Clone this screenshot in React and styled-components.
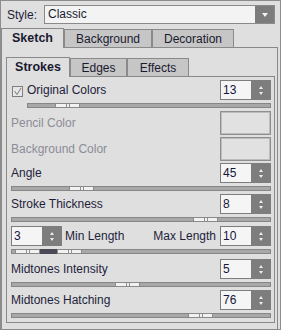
import React from 'react';
import styled, { createGlobalStyle } from 'styled-components';

const Global = createGlobalStyle`
  html, body { margin: 0; padding: 0; background: #dfdfdf; }
  body { font-family: "Liberation Sans", Arial, sans-serif; }
`;

const Window = styled.div`
  box-sizing: border-box;
  width: 281px;
  height: 330px;
  border: 1px solid #8d8d8d;
  background: #dfdfdf;
  display: flex;
  flex-direction: column;
  font-family: "Liberation Sans", Arial, sans-serif;
  font-size: 12px;
  color: #1e1e3a;
`;

const StyleRow = styled.div`
  height: 27px;
  display: flex;
  align-items: center;
  padding: 0 5px 0 6px;
  flex-shrink: 0;
`;

const StyleLabel = styled.span`
  width: 37px;
  flex-shrink: 0;
`;

const Select = styled.div`
  flex: 1;
  height: 19px;
  box-sizing: border-box;
  border: 1px solid #8a8a8a;
  background: #f3f3f3;
  display: flex;
  align-items: stretch;
`;

const SelectValue = styled.span`
  flex: 1;
  padding-left: 3px;
  line-height: 17px;
  color: #1a1a30;
`;

const SelectButton = styled.span`
  width: 19px;
  background: #7c7c7c;
  display: flex;
  align-items: center;
  justify-content: center;
  &::after {
    content: '';
    border-left: 3.5px solid transparent;
    border-right: 3.5px solid transparent;
    border-top: 4px solid #f4f4f4;
  }
`;

const TabRow = styled.div`
  display: flex;
  align-items: flex-end;
  height: ${p => p.$h}px;
  flex-shrink: 0;
`;

const Tab = styled.div`
  box-sizing: border-box;
  width: ${p => p.$w}px;
  height: ${p => (p.$active ? p.$h + 1 : p.$h - 1)}px;
  margin-bottom: ${p => (p.$active ? -1 : 0)}px;
  border: 1px solid #8a8a8a;
  border-bottom: none;
  background: ${p => (p.$active ? '#dfdfdf' : '#c6c6c6')};
  position: relative;
  z-index: ${p => (p.$active ? 1 : 0)};
  display: flex;
  align-items: center;
  justify-content: center;
  padding-bottom: ${p => (p.$active ? 1 : 0)}px;
  font-weight: ${p => (p.$active ? 'bold' : 'normal')};
  font-size: ${p => (p.$active ? '12.5px' : '12px')};
  color: #1a1a30;
`;

const SketchPanel = styled.div`
  flex: 1;
  box-sizing: border-box;
  margin-right: 2px;
  border: 1px solid #8a8a8a;
  padding: 9px 2px 6px 4px;
  display: flex;
  flex-direction: column;
`;

const StrokesPanel = styled.div`
  border: 1px solid #8a8a8a;
  padding: 3px 3px 4px 4px;
  display: flex;
  flex-direction: column;
`;

const Group = styled.div`
  display: flex;
  flex-direction: column;
  margin-bottom: ${p => p.$mb ?? 3}px;
`;

const Row = styled.div`
  display: flex;
  align-items: center;
  height: ${p => p.$h || 20}px;
  margin-bottom: ${p => p.$mb || 0}px;
`;

const Label = styled.span`
  color: ${p => (p.$disabled ? '#8c8c98' : '#1e1e3a')};
  margin-left: ${p => p.$ml || 0}px;
  white-space: nowrap;
`;

const Spacer = styled.span`
  flex: 1;
`;

const Check = styled.span`
  width: 11px;
  height: 11px;
  box-sizing: border-box;
  margin-left: 1px;
  margin-top: 2px;
  border: 1px solid #7e7e7e;
  background: #e6e6e6;
  display: flex;
  align-items: center;
  justify-content: center;
`;

const Spin = styled.div`
  width: 51px;
  height: 20px;
  box-sizing: border-box;
  border: 1px solid #7d7d7d;
  display: flex;
  flex-shrink: 0;
  margin-left: ${p => p.$ml || 0}px;
`;

const SpinValue = styled.span`
  flex: 1;
  background: #f5f5f5;
  padding-left: 2px;
  line-height: 18px;
  color: #16163a;
`;

const SpinButton = styled.span`
  width: 19px;
  background: #7d7d7d;
  display: flex;
  flex-direction: column;
  align-items: center;
  justify-content: center;
  gap: 3px;
`;

const Arrow = styled.span`
  border-left: 2.5px solid transparent;
  border-right: 2.5px solid transparent;
  ${p => (p.$up ? 'border-bottom' : 'border-top')}: 3px solid #ededed;
`;

const Swatch = styled.span`
  width: 51px;
  height: 24px;
  box-sizing: border-box;
  border: 1px solid #8f8f8f;
  box-shadow: inset 0 0 0 1px #bdbdbd;
  background: #e1e1e1;
`;

const Track = styled.div`
  position: relative;
  height: 5px;
  box-sizing: border-box;
  margin-top: 3px;
  margin-left: ${p => p.$indent || 0}px;
  border: 1px solid #868686;
  background: #a8a8a8;
`;

const Thumb = styled.span`
  position: absolute;
  top: -1px;
  left: ${p => p.$left - 1}px;
  width: 25px;
  height: 5px;
  box-sizing: border-box;
  border: 1px solid #8a8a8a;
  background: #f2f2f2;
  &::before, &::after {
    content: '';
    position: absolute;
    top: 0;
    bottom: 0;
    width: 1px;
    background: #8e8e8e;
  }
  &::before { left: 10px; }
  &::after { left: 13px; }
`;

const RangeFill = styled.span`
  position: absolute;
  top: -1px;
  left: ${p => p.$left - 1}px;
  width: ${p => p.$w}px;
  height: 5px;
  background: #4a4a56;
`;

function SpinBox({ value, ml }) {
  return (
    <Spin $ml={ml}>
      <SpinValue>{value}</SpinValue>
      <SpinButton>
        <Arrow $up />
        <Arrow />
      </SpinButton>
    </Spin>
  );
}

function Slider({ thumb, indent }) {
  return (
    <Track $indent={indent}>
      <Thumb $left={thumb} />
    </Track>
  );
}

function ValueGroup({ label, value, thumb, mb }) {
  return (
    <Group $mb={mb}>
      <Row>
        <Label>{label}</Label>
        <Spacer />
        <SpinBox value={value} />
      </Row>
      <Slider thumb={thumb} />
    </Group>
  );
}

export default function App() {
  return (
    <>
      <Global />
      <Window>
        <StyleRow>
          <StyleLabel>Style:</StyleLabel>
          <Select>
            <SelectValue>Classic</SelectValue>
            <SelectButton />
          </Select>
        </StyleRow>
        <TabRow $h={19}>
          <Tab $w={63} $h={19} $active>Sketch</Tab>
          <Tab $w={88} $h={19}>Background</Tab>
          <Tab $w={82} $h={19}>Decoration</Tab>
        </TabRow>
        <SketchPanel>
          <TabRow $h={19}>
            <Tab $w={64} $h={19} $active>Strokes</Tab>
            <Tab $w={57} $h={19}>Edges</Tab>
            <Tab $w={62} $h={19}>Effects</Tab>
          </TabRow>
          <StrokesPanel>
            <Group>
              <Row>
                <Check>
                  <svg width="9" height="9" viewBox="0 0 9 9">
                    <polyline points="1.5,4 4,7.5 8,1" fill="none" stroke="#7a7a7a" strokeWidth="1" />
                  </svg>
                </Check>
                <Label $ml={4}>Original Colors</Label>
                <Spacer />
                <SpinBox value="13" />
              </Row>
              <Slider thumb={28} indent={16} />
            </Group>
            <Row $h={24} $mb={2}>
              <Label $disabled>Pencil Color</Label>
              <Spacer />
              <Swatch />
            </Row>
            <Row $h={24} $mb={2}>
              <Label $disabled>Background Color</Label>
              <Spacer />
              <Swatch />
            </Row>
            <ValueGroup label="Angle" value="45" thumb={58} />
            <ValueGroup label="Stroke Thickness" value="8" thumb={182} mb={4} />
            <Group $mb={5}>
              <Row>
                <SpinBox value="3" />
                <Label $ml={3}>Min Length</Label>
                <Spacer />
                <Label>Max Length</Label>
                <SpinBox value="10" ml={4} />
              </Row>
              <Track>
                <Thumb $left={4} />
                <RangeFill $left={29} $w={17} />
                <Thumb $left={46} />
              </Track>
            </Group>
            <ValueGroup label="Midtones Intensity" value="5" thumb={104} />
            <ValueGroup label="Midtones Hatching" value="76" thumb={177} mb={0} />
          </StrokesPanel>
        </SketchPanel>
      </Window>
    </>
  );
}
